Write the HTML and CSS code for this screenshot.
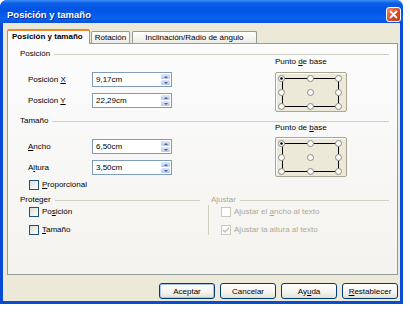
FILE: index.html
```html
<!DOCTYPE html>
<html lang="es">
<head>
    <meta charset="UTF-8">
    <title>Posición y tamaño</title>
    <link rel="stylesheet" href="styles.css">
</head>
<body>
    <div class="window">
        <div class="titlebar">
            <span class="title">Posición y tamaño</span>
            <span class="close">
                <svg width="13" height="13" viewBox="0 0 13 13">
                    <path d="M3.5 3.5 L9.5 9.5 M9.5 3.5 L3.5 9.5" stroke="#fff" stroke-width="1.8" stroke-linecap="round"/>
                </svg>
            </span>
        </div>

        <div class="client">
            <div class="tabs">
                <div class="tab active">Posición y tamaño</div>
                <div class="tab">Rotación</div>
                <div class="tab wide">Inclinación/Radio de ángulo</div>
            </div>

            <div class="pane">
                <!-- Posición -->
                <div class="group">
                    <div class="group-head"><span>Posición</span><i class="rule"></i></div>
                    <div class="group-body">
                        <div class="fields">
                            <div class="field">
                                <label>Posición <u>X</u></label>
                                <div class="spin"><span>9,17cm</span><span class="spin-btn"><span class="up"></span><span class="down"></span></span></div>
                            </div>
                            <div class="field">
                                <label>Posición <u>Y</u></label>
                                <div class="spin"><span>22,29cm</span><span class="spin-btn"><span class="up"></span><span class="down"></span></span></div>
                            </div>
                        </div>
                        <div class="base">
                            <div class="base-label">Punto <u>d</u>e base</div>
                            <div class="base-box">
                                <svg width="70" height="38" viewBox="0 0 70 38">
                                    <path d="M5 5.5 H63 M5 33.5 H63 M6.5 5 V34 M62.5 5 V34" stroke="#000" stroke-width="1" fill="none"/>
                                    <g fill="#fff" stroke="#8c8a80">
                                        <circle cx="5.5" cy="5.5" r="3"/>
                                        <circle cx="34.5" cy="5.5" r="3"/>
                                        <circle cx="62.5" cy="5.5" r="3"/>
                                        <circle cx="5.5" cy="19.5" r="3"/>
                                        <circle cx="34.5" cy="19.5" r="3"/>
                                        <circle cx="62.5" cy="19.5" r="3"/>
                                        <circle cx="5.5" cy="33.5" r="3"/>
                                        <circle cx="34.5" cy="33.5" r="3"/>
                                        <circle cx="62.5" cy="33.5" r="3"/>
                                    </g>
                                    <circle cx="5.5" cy="5.5" r="1.3" fill="#000"/>
                                </svg>
                            </div>
                        </div>
                    </div>
                </div>

                <!-- Tamaño -->
                <div class="group size">
                    <div class="group-head"><span>Tamaño</span><i class="rule"></i></div>
                    <div class="group-body">
                        <div class="fields">
                            <div class="field">
                                <label><u>A</u>ncho</label>
                                <div class="spin"><span>6,50cm</span><span class="spin-btn"><span class="up"></span><span class="down"></span></span></div>
                            </div>
                            <div class="field">
                                <label>A<u>l</u>tura</label>
                                <div class="spin"><span>3,50cm</span><span class="spin-btn"><span class="up"></span><span class="down"></span></span></div>
                            </div>
                            <div class="check prop"><span class="box"></span><span><u>P</u>roporcional</span></div>
                        </div>
                        <div class="base">
                            <div class="base-label">Punto de <u>b</u>ase</div>
                            <div class="base-box">
                                <svg width="70" height="38" viewBox="0 0 70 38">
                                    <path d="M5 5.5 H63 M5 33.5 H63 M6.5 5 V34 M62.5 5 V34" stroke="#000" stroke-width="1" fill="none"/>
                                    <g fill="#fff" stroke="#8c8a80">
                                        <circle cx="5.5" cy="5.5" r="3"/>
                                        <circle cx="34.5" cy="5.5" r="3"/>
                                        <circle cx="62.5" cy="5.5" r="3"/>
                                        <circle cx="5.5" cy="19.5" r="3"/>
                                        <circle cx="34.5" cy="19.5" r="3"/>
                                        <circle cx="62.5" cy="19.5" r="3"/>
                                        <circle cx="5.5" cy="33.5" r="3"/>
                                        <circle cx="34.5" cy="33.5" r="3"/>
                                        <circle cx="62.5" cy="33.5" r="3"/>
                                    </g>
                                    <circle cx="5.5" cy="5.5" r="1.3" fill="#000"/>
                                </svg>
                            </div>
                        </div>
                    </div>
                </div>

                <!-- Proteger / Ajustar -->
                <div class="split">
                    <div class="protect">
                        <div class="group-head"><span>Proteger</span><i class="rule"></i></div>
                        <div class="rows">
                            <div class="check"><span class="box"></span><span>Po<u>s</u>ición</span></div>
                            <div class="check"><span class="box"></span><span><u>T</u>amaño</span></div>
                        </div>
                    </div>
                    <div class="adjust disabled">
                        <div class="group-head"><span>Ajustar</span><i class="rule"></i></div>
                        <div class="rows">
                            <div class="check"><span class="box"></span><span>Ajustar el <u>a</u>ncho al texto</span></div>
                            <div class="check"><span class="box checked">
                                <svg width="8" height="8" viewBox="0 0 8 8"><path d="M1 4 L3 6 L7 1.5" stroke="#c2c0b2" stroke-width="1.4" fill="none"/></svg>
                            </span><span>A<u>j</u>ustar la altura al texto</span></div>
                        </div>
                    </div>
                </div>
            </div>

            <div class="buttons">
                <button class="btn default">Aceptar</button>
                <button class="btn">Cancelar</button>
                <button class="btn">Ay<u>u</u>da</button>
                <button class="btn"><u>R</u>establecer</button>
            </div>
        </div>
    </div>
</body>
</html>
```

FILE: styles.css
```css
body {
    margin: 0;
    background: #fff;
    font-family: "Liberation Sans", Arial, sans-serif;
    font-size: 8px;
    color: #000;
}
.window {
    width: 403px;
    height: 304px;
    background: #0a4bd6;
    border-radius: 7px 7px 0 0;
    display: flex;
    flex-direction: column;
}
.titlebar {
    height: 23px;
    box-sizing: border-box;
    padding: 5px 2px 0 7px;
    display: flex;
    align-items: center;
    justify-content: space-between;
    border-radius: 7px 7px 0 0;
    background: linear-gradient(#3d8ef7 0%, #0a5ee8 14%, #0054e3 45%, #0a62f0 80%, #0552e0 100%);
}
.title {
    color: #fff;
    font-weight: bold;
    font-size: 9.5px;
    text-shadow: 1px 1px #0b2a8c;
}
.close {
    width: 15px;
    height: 15px;
    box-sizing: border-box;
    border: 1px solid #fff;
    border-radius: 3px;
    background: linear-gradient(135deg, #f08d6c, #d9471f 60%, #c83a14);
    display: flex;
    align-items: center;
    justify-content: center;
}
.client {
    flex: 1;
    margin: 0 3px 3px;
    background: #ece9d8;
    padding: 6px 2px 0 4px;
    display: flex;
    flex-direction: column;
}

/* tabs */
.tabs {
    display: flex;
    align-items: flex-end;
    gap: 1px;
    height: 14px;
    position: relative;
    z-index: 1;
}
.tab {
    height: 12px;
    box-sizing: border-box;
    border: 1px solid #919b9c;
    border-bottom: none;
    border-radius: 2px 2px 0 0;
    padding: 0 3px;
    line-height: 11px;
    background: linear-gradient(#fff, #ecebe5);
}
.tab.active {
    height: 15px;
    margin-bottom: -1px;
    border-top: 2px solid #e68b2c;
    padding: 0 6px 0 4px;
    line-height: 12px;
    font-weight: bold;
    background: #fcfcfe;
}
.tab.wide {
    margin-left: 1px;
    padding: 0 12px 0 12px;
}

/* pane */
.pane {
    height: 232px;
    box-sizing: border-box;
    border: 1px solid #919b9c;
    background: linear-gradient(#fcfcfe, #f4f3ee);
    padding: 5px 8px 0 12px;
    line-height: 10px;
}
.group-head {
    display: flex;
    align-items: center;
    gap: 4px;
    height: 10px;
}
.group-head .rule {
    flex: 1;
    height: 1px;
    background: #d0d0bf;
}
.group-body {
    display: flex;
}
.group.size {
    margin-top: 4px;
}
.fields {
    width: 255px;
    padding-top: 13px;
    display: flex;
    flex-direction: column;
    gap: 6px;
}
.field {
    display: flex;
    align-items: center;
    height: 15px;
    padding-left: 8px;
}
.field label {
    width: 64px;
}
.spin {
    width: 80px;
    height: 15px;
    box-sizing: border-box;
    border: 1px solid #7f9db9;
    background: #fff;
    padding: 0 1px 0 3px;
    display: flex;
    align-items: center;
    justify-content: space-between;
}
.spin-btn {
    width: 9px;
    height: 11px;
    display: flex;
    flex-direction: column;
    gap: 1px;
}
.spin-btn span {
    flex: 1;
    display: flex;
    align-items: center;
    justify-content: center;
    border-radius: 1px;
    background: linear-gradient(#dde7fd, #b4c7f4);
}
.spin-btn .up::after,
.spin-btn .down::after {
    content: "";
    border-left: 2px solid transparent;
    border-right: 2px solid transparent;
}
.spin-btn .up::after {
    border-bottom: 2px solid #4d6185;
}
.spin-btn .down::after {
    border-top: 2px solid #4d6185;
}

/* punto de base */
.base {
    width: 72px;
    margin-top: -2px;
}
.base-box {
    margin-top: 5px;
    height: 40px;
    box-sizing: border-box;
    border: 1px solid #a8a592;
    border-radius: 2px;
    background: #ece9d8;
    box-shadow: inset 1px 1px #fff;
}
.base-box svg {
    display: block;
}
.size .base {
    margin-top: -3px;
}
.size .base-box {
    margin-top: 4px;
}

/* checkboxes */
.check {
    display: flex;
    align-items: center;
    gap: 3px;
    height: 11px;
}
.check .box {
    width: 10px;
    height: 10px;
    box-sizing: border-box;
    border: 1px solid #1c5180;
    background: linear-gradient(135deg, #dcdcd7, #fff);
    display: flex;
    align-items: center;
    justify-content: center;
}
.prop {
    margin-top: -2px;
    margin-left: 9px;
}

.split {
    display: flex;
    margin-top: 5px;
}
.protect {
    width: 187px;
    padding-right: 7px;
    box-sizing: border-box;
}
.protect .rows {
    padding-left: 9px;
}
.adjust {
    flex: 1;
}
.adjust .group-head {
    padding-left: 4px;
}
.adjust .rows {
    margin-left: 1px;
    padding-left: 12px;
    border-left: 1px solid #d0d0bf;
}
.rows {
    padding-top: 1px;
    display: flex;
    flex-direction: column;
    gap: 7px;
}
.disabled {
    color: #aca899;
}
.disabled .check .box {
    border-color: #cac8bb;
    background: #fff;
}

/* buttons */
.buttons {
    display: flex;
    justify-content: flex-end;
    gap: 5px;
    margin-top: 8px;
}
.btn {
    width: 56px;
    height: 16px;
    padding: 0;
    font-family: inherit;
    font-size: 8px;
    color: #000;
    border: 1px solid #003c74;
    border-radius: 3px;
    background: linear-gradient(#fff, #f4f3ee 60%, #e3e0d3);
}
.btn.default {
    box-shadow: inset 0 0 0 1px #aac4f2;
}
```
